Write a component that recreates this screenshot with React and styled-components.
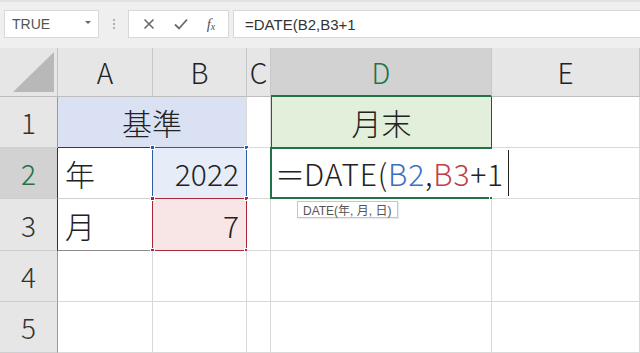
import React from 'react'
import styled, { createGlobalStyle } from 'styled-components'

const GlobalStyle = createGlobalStyle`
  html, body {
    margin: 0;
    padding: 0;
    background: #fff;
  }
  * {
    box-sizing: border-box;
  }
`

const cellFont = `"Noto Sans CJK JP", "Noto Sans", sans-serif`
const green = '#217346'
const gridLine = '#d9d9d9'
const headerBg = '#e6e6e6'
const headerSelBg = '#d2d2d2'

const Window = styled.div`
  width: 640px;
  height: 353px;
  overflow: hidden;
  display: flex;
  flex-direction: column;
  font-family: ${cellFont};
  font-weight: 300;
`

const Toolbar = styled.div`
  height: 48px;
  flex: none;
  background: #efefef;
  border-top: 2px solid #e2e2e2;
  display: flex;
  align-items: flex-start;
  padding: 8px 0 0 4px;
  font-weight: 400;
`

const NameBox = styled.div`
  width: 95px;
  height: 28px;
  background: #fff;
  border: 1px solid #d8d8d8;
  display: flex;
  align-items: center;
  justify-content: space-between;
  padding: 0 7px 0 7px;
  font-family: "Liberation Sans", Arial, sans-serif;
  font-size: 14px;
  color: #555;
`

const Caret = styled.span`
  width: 0;
  height: 0;
  border-left: 3px solid transparent;
  border-right: 3px solid transparent;
  border-top: 3px solid #666;
  margin-top: -4px;
`

const Grip = styled.div`
  width: 29px;
  height: 28px;
  display: flex;
  flex-direction: column;
  align-items: center;
  justify-content: center;
  gap: 2px;

  span {
    width: 2px;
    height: 2px;
    background: #b0b0b0;
  }
`

const ButtonBox = styled.div`
  width: 101px;
  height: 28px;
  background: #fff;
  border: 1px solid #d8d8d8;
  display: flex;
  align-items: center;
  justify-content: space-around;
  padding: 0 4px;
  color: #6a6a6a;
`

const Fx = styled.span`
  font-family: "Liberation Serif", "Times New Roman", serif;
  font-style: italic;
  font-size: 15px;
  color: #555;

  sub {
    font-size: 10px;
    vertical-align: -1px;
  }
`

const FormulaBox = styled.div`
  flex: 1;
  height: 28px;
  margin-left: 4px;
  background: #fff;
  border: 1px solid #d8d8d8;
  border-right: none;
  display: flex;
  align-items: center;
  padding-left: 11px;
  font-family: "Liberation Sans", Arial, sans-serif;
  font-size: 15px;
  color: #333;
`

const Sheet = styled.div`
  flex: 1;
  display: grid;
  grid-template-columns: 58px 95px 94px 24px 221px 148px;
  grid-template-rows: 49px 51px 51px 52px 51px 51px;
  background: #fff;
`

const Corner = styled.div`
  background: ${headerBg};
  border-right: 1px solid #c4c4c4;
  border-bottom: 1px solid #bdbdbd;
  display: flex;
  align-items: flex-end;
  justify-content: flex-end;
  padding: 0 3px 4px 0;
`

const Triangle = styled.div`
  width: 41px;
  height: 40px;
  background: #b8b8b8;
  clip-path: polygon(100% 0, 100% 100%, 0 100%);
`

const ColHead = styled.div`
  background: ${p => (p.$sel ? headerSelBg : headerBg)};
  color: ${p => (p.$sel ? green : '#222')};
  border-right: 1px solid #c8c8c8;
  border-bottom: ${p => (p.$sel ? `2px solid ${green}` : '1px solid #bdbdbd')};
  display: flex;
  align-items: center;
  justify-content: center;
  font-size: 28px;
  padding-top: ${p => (p.$sel ? '1px' : '0')};
`

const RowHead = styled.div`
  background: ${p => (p.$sel ? headerSelBg : headerBg)};
  color: ${p => (p.$sel ? green : '#333')};
  border-right: 1px solid #9a9a9a;
  border-bottom: 1px solid #cfcfcf;
  display: flex;
  align-items: center;
  justify-content: center;
  font-size: 28px;
`

const Cell = styled.div`
  position: relative;
  grid-column: ${p => (p.$span ? `span ${p.$span}` : 'auto')};
  background: ${p => p.$bg || '#fff'};
  border-right: 1px solid ${p => p.$rightLine || gridLine};
  border-bottom: 1px solid ${p => p.$bottomLine || gridLine};
  border-left: ${p => (p.$leftLine ? `1px solid ${p.$leftLine}` : 'none')};
  display: flex;
  align-items: center;
  justify-content: ${p => p.$align || 'flex-start'};
  padding: 0 7px;
  font-size: 30px;
  color: #222;
  white-space: nowrap;
`

const RefBox = styled.div`
  position: absolute;
  inset: -1px -1px -1px -1px;
  border: 1px solid ${p => p.$color};
  pointer-events: none;
`

const Handle = styled.span`
  position: absolute;
  width: 5px;
  height: 5px;
  background: ${p => p.$color};
  border: 1px solid #fff;
  ${p => (p.$top ? 'top: -3px;' : 'bottom: -3px;')}
  ${p => (p.$left ? 'left: -3px;' : 'right: -3px;')}
`

const ActiveBox = styled.div`
  position: absolute;
  inset: -1px -1px -1px -1px;
  border: 2px solid ${green};
`

const FillHandle = styled.span`
  position: absolute;
  right: -4px;
  bottom: -4px;
  width: 6px;
  height: 6px;
  background: ${green};
  border: 1px solid #fff;
`

const Editor = styled.div`
  position: absolute;
  left: 1px;
  top: 1px;
  bottom: 1px;
  right: -17px;
  background: #fff;
  display: flex;
  align-items: center;
  padding-left: 3px;
  font-size: 30px;
  letter-spacing: 0.8px;
  color: #222;
  white-space: nowrap;
  z-index: 2;
`

const Equals = styled.span`
  letter-spacing: -5px;
  margin-right: 4px;
`

const TextCaret = styled.span`
  align-self: stretch;
  flex: none;
  width: 1px;
  margin: 1px 0 1px 4px;
  background: #222;
`

const Ref = styled.span`
  color: ${p => p.$color};
`

const Tip = styled.div`
  position: absolute;
  left: 26px;
  top: calc(100% + 3px);
  height: 17px;
  display: flex;
  align-items: center;
  padding: 0 6px 0 5px;
  background: #fff;
  border: 1px solid #c6c6c6;
  box-shadow: 1px 1px 1px rgba(0, 0, 0, 0.08);
  font-family: "Liberation Sans", "Noto Sans CJK JP", sans-serif;
  font-weight: 400;
  font-size: 12px;
  color: #555;
  white-space: nowrap;
  z-index: 3;
`

const blue = '#2e5aa8'
const red = '#a8283a'

const Corners = ({ color }) => (
  <>
    <Handle $color={color} $top $left />
    <Handle $color={color} $top />
    <Handle $color={color} $left />
    <Handle $color={color} />
  </>
)

const Cross = () => (
  <svg width="14" height="14" viewBox="0 0 14 14">
    <path d="M2.5 2.5 L11.5 11.5 M11.5 2.5 L2.5 11.5" stroke="#6a6a6a" strokeWidth="1.6" fill="none" />
  </svg>
)

const Tick = () => (
  <svg width="16" height="14" viewBox="0 0 16 14">
    <path d="M2 7.5 L6 11.5 L14 2.5" stroke="#6a6a6a" strokeWidth="1.8" fill="none" />
  </svg>
)

const App = () => (
  <Window>
    <GlobalStyle />
    <Toolbar>
      <NameBox>
        TRUE
        <Caret />
      </NameBox>
      <Grip>
        <span />
        <span />
        <span />
      </Grip>
      <ButtonBox>
        <Cross />
        <Tick />
        <Fx>
          f<sub>x</sub>
        </Fx>
      </ButtonBox>
      <FormulaBox>=DATE(B2,B3+1</FormulaBox>
    </Toolbar>

    <Sheet>
      <Corner>
        <Triangle />
      </Corner>
      <ColHead>A</ColHead>
      <ColHead>B</ColHead>
      <ColHead>C</ColHead>
      <ColHead $sel>D</ColHead>
      <ColHead>E</ColHead>

      <RowHead>1</RowHead>
      <Cell $span={2} $bg="#d9e1f2" $align="center" $bottomLine="#3a3a3a">
        基準
      </Cell>
      <Cell />
      <Cell $bg="#e2efda" $align="center" $rightLine="#3d4a40" $leftLine="#2f5e3e">
        月末
      </Cell>
      <Cell />

      <RowHead $sel>2</RowHead>
      <Cell $leftLine="#333" $bottomLine="#d0d0d0" style={{ marginLeft: '-1px' }}>
        年
      </Cell>
      <Cell $bg="#e6edf8" $align="flex-end">
        2022
        <RefBox $color={blue} />
        <Corners color={blue} />
      </Cell>
      <Cell />
      <Cell>
        <ActiveBox />
        <FillHandle />
        <Editor>
          <Equals>＝</Equals>DATE(<Ref $color="#3a6fc4">B2</Ref>,<Ref $color="#c0404a">B3</Ref>+1
          <TextCaret />
        </Editor>
        <Tip>DATE(年, 月, 日)</Tip>
      </Cell>
      <Cell />

      <RowHead>3</RowHead>
      <Cell $leftLine="#333" $bottomLine="#8c8c8c" style={{ marginLeft: '-1px' }}>
        月
      </Cell>
      <Cell $bg="#f8e6e7" $align="flex-end">
        7
        <RefBox $color={red} />
        <Corners color={red} />
      </Cell>
      <Cell />
      <Cell />
      <Cell />

      <RowHead>4</RowHead>
      <Cell />
      <Cell />
      <Cell />
      <Cell />
      <Cell />

      <RowHead>5</RowHead>
      <Cell />
      <Cell />
      <Cell />
      <Cell />
      <Cell />
    </Sheet>
  </Window>
)

export default App
